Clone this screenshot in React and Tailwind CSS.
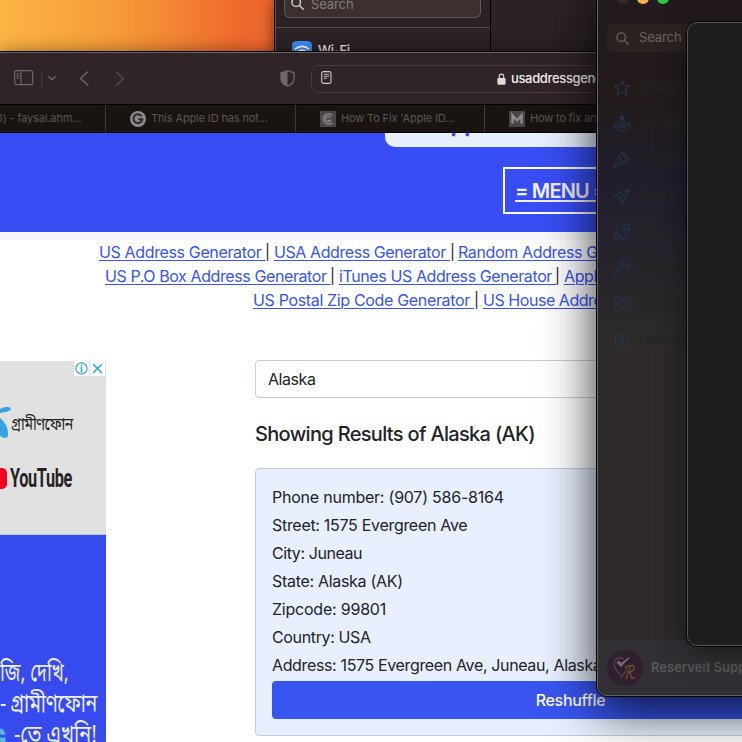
import React from "react";

const stroke = {
  fill: "none",
  stroke: "currentColor",
  strokeWidth: 1.2,
  strokeLinecap: "round",
  strokeLinejoin: "round",
};

function SearchIcon({ className }) {
  return (
    <svg viewBox="0 0 14 14" className={className} {...stroke} strokeWidth="1.4">
      <circle cx="5.6" cy="5.6" r="4.6" />
      <path d="M9 9l4.2 4.2" />
    </svg>
  );
}

function SettingsWindow() {
  return (
    <div className="absolute left-[274px] top-0 h-[60px] w-[480px] flex border-l border-black bg-[#2c2223] shadow-[0_0_14px_rgba(0,0,0,0.55)]">
      <div className="w-[216px] border-l border-[#5b5150] border-r border-r-black">
        <div className="ml-2 flex h-[18px] w-[197px] items-start rounded-b-md border border-t-0 border-[#625857] bg-[#3b302f] pl-1.5">
          <SearchIcon className="-mt-[3px] size-[13px] text-[#e2dedd]" />
          <span className="ml-[7px] -mt-[4px] text-[13px] leading-4 tracking-[-0.1px] text-[#857b7a]">Search</span>
        </div>
        <div className="mt-[9px] h-px bg-[#574d4c]" />
        <div className="mt-[13px] flex pl-4">
          <svg viewBox="0 0 20 20" className="size-5" fill="none">
            <rect width="20" height="20" rx="4.5" fill="#3b88f4" />
            <path d="M2.8 8.4Q10 2.2 17.2 8.4M5.4 11.2q4.6-3.9 9.2 0" stroke="#fff" strokeWidth="1.7" />
          </svg>
          <span className="ml-[6px] mt-px text-[13px] font-medium leading-4 tracking-[-0.3px] text-[#e8e4e3]">Wi-Fi</span>
        </div>
      </div>
    </div>
  );
}

function Toolbar() {
  return (
    <div className="flex h-[51px] shrink-0 items-center bg-[#302526] text-[#716766]">
      <svg viewBox="0 0 20 16" className="ml-[14px] mb-px h-4 w-5 shrink-0" {...stroke}>
        <rect x=".7" y=".7" width="18" height="14" rx="2" />
        <path d="M7 .7v14M3 3.5h1.8M3 5.7h1.8M3 7.9h1.8" />
      </svg>
      <div className="ml-[7px] h-[18px] w-px bg-[#453a3a]" />
      <svg viewBox="0 0 8 5" className="ml-1.5 h-[5px] w-2 shrink-0" {...stroke} strokeWidth="1.3">
        <path d="M.8 .8L4 3.8 7.2 .8" />
      </svg>
      <svg viewBox="0 0 10 15" className="ml-[23px] h-[15px] w-[10px] shrink-0" {...stroke} strokeWidth="1.5">
        <path d="M8.5 1L1.6 7.5 8.5 14" />
      </svg>
      <svg viewBox="0 0 10 15" className="ml-[26px] h-[15px] w-[10px] shrink-0 text-[#574c4c]" {...stroke} strokeWidth="1.5">
        <path d="M1.5 1L8.4 7.5 1.5 14" />
      </svg>
      <svg viewBox="0 0 15 17" className="ml-[155px] mr-px mb-px h-[17px] w-[15px] shrink-0">
        <path d="M7.5 .7L14 3v6c0 3.300-3 5.900-6.500 7.200C4 14.900 1 12.300 1 9V3z" fill="none" stroke="currentColor" strokeWidth="1.3" />
        <path d="M7.500 .7v15.500C4 14.900 1 12.300 1 9V3z" fill="currentColor" />
      </svg>
      <div className="ml-[15px] flex h-[28px] w-[500px] shrink-0 items-center rounded-lg border border-[#483c3c]">
        <svg viewBox="0 0 11 13" className="ml-[9px] mb-[3px] h-[13px] w-[11px] text-[#cfcaca]" {...stroke} strokeWidth="1.1">
          <rect x=".7" y=".6" width="9.300" height="11.800" rx="1.6" />
          <path d="M3 3.300h4.800M3 5.300h4.800M3 7.300h2.600" strokeWidth=".9" />
        </svg>
        <svg viewBox="0 0 9 12" className="ml-[165px] h-3 w-[9px] text-[#dedad9]">
          <rect x=".4" y="5" width="8.200" height="6.800" rx="1.2" fill="currentColor" />
          <path d="M2.300 5.500V3.300a2.200 2.200 0 014.400 0v2.200" fill="none" stroke="currentColor" strokeWidth="1.100" />
        </svg>
        <span className="ml-[5px] text-[13px] font-medium tracking-[-0.35px] text-[#f0eeee]">usaddressgenerator.com</span>
      </div>
    </div>
  );
}

function TabBar() {
  return (
    <div className="flex h-[27px] shrink-0 items-center bg-[#191412] text-[11px] tracking-[-0.14px] text-[#5c5654]">
      <div className="flex h-full w-[106px] shrink-0 items-center border-r border-[#443a39]">
        <span className="-ml-[4px] whitespace-nowrap">6) - faysal.ahm...</span>
      </div>
      <div className="flex h-full w-[190px] shrink-0 items-center border-r border-[#443a39] pl-6">
        <svg viewBox="0 0 16 16" className="size-4">
          <circle cx="8" cy="8" r="8" fill="#8b8988" />
          <path d="M11.500 5.300A4.400 4.400 0 1012.200 8.300H8.300" fill="none" stroke="#2d2a29" strokeWidth="2" />
        </svg>
        <span className="ml-[5px] whitespace-nowrap">This Apple ID has not...</span>
      </div>
      <div className="flex h-full w-[189px] shrink-0 items-center border-r border-[#443a39] pl-6">
        <svg viewBox="0 0 16 16" className="size-4">
          <rect width="16" height="16" rx="1" fill="#4b4847" />
          <path d="M12.300 4.600A5.100 5.100 0 1012.300 11.400M10.300 6.500A2.600 2.600 0 1010.300 9.500H8" fill="none" stroke="#888585" strokeWidth="1.500" />
        </svg>
        <span className="ml-[5px] whitespace-nowrap">How To Fix 'Apple ID...</span>
      </div>
      <div className="flex h-full w-[190px] shrink-0 items-center pl-6">
        <svg viewBox="0 0 16 16" className="size-4">
          <rect width="16" height="16" fill="#484544" />
          <path d="M3.500 12.500V4.500L8 9.500l4.500-5v8" fill="none" stroke="#8f8c8b" strokeWidth="2.400" />
        </svg>
        <span className="ml-[5px] whitespace-nowrap">How to fix an Apple ID</span>
      </div>
    </div>
  );
}

function Ad() {
  return (
    <aside className="mt-[49px] flex h-[381px] w-[106px] shrink-0 flex-col overflow-hidden bg-[#374aee]">
      <div className="h-[174px] shrink-0 border-b border-[#c6c8dc] bg-[#e1e1e1]">
        <div className="flex h-[15px] justify-end gap-px pr-px text-[#27aac5]">
          <svg viewBox="0 0 15 15" className="size-[15px] bg-white" {...stroke} strokeWidth="1.1">
            <circle cx="7.500" cy="7.500" r="5.600" />
            <path d="M7.500 6.500v4.200M7.500 4.300v.3" strokeWidth="1.600" />
          </svg>
          <svg viewBox="0 0 15 15" className="size-[15px] bg-white" {...stroke} strokeWidth="1.500">
            <path d="M3.500 3.500l8 8M11.500 3.500l-8 8" />
          </svg>
        </div>
        <div className="mt-[30px] flex h-[34px] items-center">
          <svg viewBox="0 0 12 34" className="h-[34px] w-3 shrink-0" fill="#37a2e6">
            <path d="M0 3C4 .5 9 .4 10.500 2 12.500 4.500 6 6 0 7zM0 12c5 4 8.500 10 8 17-.3 3.500-3.500 4-8 1z" />
          </svg>
          <span className="-ml-[1px] mt-1 origin-left scale-x-[0.79] whitespace-nowrap font-[Noto_Sans_Bengali,Noto_Sans,sans-serif] text-[18px] tracking-[-0.6px] text-[#242424]">গ্রামীণফোন</span>
        </div>
        <div className="mt-[26px] flex h-[24px] items-center">
          <div className="h-[21px] w-[7px] rounded-r-[5px] bg-[#f40020]" />
          <span className="ml-[3px] mt-0.5 origin-left scale-x-[0.65] font-['Roboto'] text-[25px] font-bold leading-6 tracking-[-0.5px] text-[#242424]">YouTube</span>
        </div>
      </div>
      <div className="mt-[124px] flex flex-col whitespace-nowrap font-[Noto_Sans_Bengali,Noto_Sans,sans-serif] text-[25px] leading-[31px] text-[#eef0ff]">
        <div className="origin-left scale-x-[0.73]">জি, দেখি,</div>
        <div className="origin-left scale-x-[0.78] tracking-[-0.5px]">- গ্রামীণফোন</div>
        <div className="flex">
          <span className="-ml-[13px] w-[27px] shrink-0 pt-0.5 font-['Roboto'] text-[29px] font-black leading-8 text-[#54bbe3]">G</span>
          <span className="origin-left scale-x-[0.79]">-তে এখনি!</span>
        </div>
      </div>
    </aside>
  );
}

const link = "text-[#3654ee] underline underline-offset-2 decoration-1 whitespace-pre shrink-0";
const bar = "shrink-0 text-left text-[15px] text-[#202428]";

function Links() {
  return (
    <nav className="text-[16px] leading-6 tracking-[-0.36px]">
      <div className="flex pl-[99px]">
        <a className={`${link} w-[166px]`}>US Address Generator </a><span className={`${bar} w-[9px]`}>|</span>
        <a className={`${link} w-[176px] tracking-[-0.42px]`}>USA Address Generator </a><span className={`${bar} w-[8px]`}>|</span>
        <a className={link}>Random Address Generator </a>
      </div>
      <div className="flex pl-[105px]">
        <a className={`${link} w-[225px] tracking-[-0.4px]`}>US P.O Box Address Generator </a><span className={`${bar} w-[9px]`}>|</span>
        <a className={`${link} w-[216px] tracking-[-0.4px]`}>iTunes US Address Generator </a><span className={`${bar} w-[9px]`}>|</span>
        <a className={link}>Apple ID Address</a>
      </div>
      <div className="flex pl-[253px]">
        <a className={`${link} w-[221px] tracking-[-0.34px]`}>US Postal Zip Code Generator </a><span className={`${bar} w-[9px]`}>|</span>
        <a className={`${link} tracking-[-0.45px]`}>US House Address</a>
      </div>
    </nav>
  );
}

const results = [
  ["Phone number: (907) 586-8164", "tracking-[-0.23px]"],
  ["Street: 1575 Evergreen Ave", "tracking-[-0.3px]"],
  ["City: Juneau", "tracking-[-0.42px]"],
  ["State: Alaska (AK)", "tracking-[-0.3px]"],
  ["Zipcode: 99801", "tracking-[-0.22px]"],
  ["Country: USA", "tracking-[-0.36px]"],
  ["Address: 1575 Evergreen Ave, Juneau, Alaska, 99801", "tracking-[-0.36px]"],
];

function BrowserWindow() {
  return (
    <div className="absolute left-0 top-[51px] flex h-[700px] w-[900px] flex-col border-t border-black bg-white shadow-[0_0_16px_rgba(0,0,0,0.4)]">
      <div className="h-px shrink-0 bg-[#6b6060]" />
      <Toolbar />
      <div className="h-px shrink-0 bg-black" />
      <TabBar />
      <div className="h-px shrink-0 bg-black" />
      <header className="h-[99px] shrink-0 overflow-hidden bg-[#384ef4]">
        <div className="ml-[385px] flex h-[14px] w-[370px] items-end rounded-b-[10px] bg-[#e8effe] pl-[49px]">
          <span className="mb-[11px] text-[22px] font-bold leading-6 text-[#384ef4]">Apple ID</span>
        </div>
        <div className="ml-[503px] mt-[20px] flex h-[47px] w-[134px] items-center border-2 border-white pl-[10px]">
          <span className="whitespace-nowrap text-[20px] font-semibold tracking-[-0.85px] text-[#f3f2f0] underline decoration-2 underline-offset-[2px]">= MENU =</span>
        </div>
      </header>
      <div className="h-2 shrink-0 bg-[#f6f8fa]" />
      <Links />
      <div className="flex">
        <Ad />
        <main className="ml-[149px] mt-12 w-[630px] shrink-0 text-[16px] tracking-[-0.3px] text-[#202428]">
          <div className="flex h-[38px] items-center rounded-[4px] border border-[#c6cdd7] pl-3 tracking-[-0.45px]">Alaska</div>
          <h1 className="mt-6 text-[20px] font-medium leading-6 tracking-[-0.68px]">Showing Results of Alaska (AK)</h1>
          <section className="mt-[22px] h-[268px] rounded-[4px] border border-[#c2cadb] bg-[#e8effe] px-4 pt-[14px]">
            {results.map(([line, tracking]) => (
              <p key={line} className={`whitespace-nowrap leading-7 ${tracking}`}>{line}</p>
            ))}
            <button className="mt-0.5 flex h-[38px] w-full items-center justify-center rounded-[4px] bg-[#3855f0] pl-px font-medium text-white">Reshuffle</button>
          </section>
        </main>
      </div>
    </div>
  );
}

const menu = [
  ["Discover", <path d="M9 1.500l2.200 5.100 5.400.5-4.100 3.600 1.300 5.400L9 13.300l-4.800 2.800 1.300-5.400L1.400 7.100l5.400-.5z" />],
  ["Arcade", <><circle cx="9" cy="2.800" r="1.900" fill="currentColor" /><path d="M9 4v6M6.500 7L1 9.700l8 3.600 8-3.600L11.500 7M1 9.700v3l8 4 8-4v-3M6.500 10q2.500 1.500 5 0" /></>],
  ["Create", <path d="M9.200 1.200l6.300 6.300-3.700 4.600-6.600-6.300zM11.200 3.200L9.800 5.200M13.400 5.400L12 7.200M5.200 5.800L4.700 8.200l1.600 1.800-4.600 4.200c-1.300 1.500.4 3.300 1.900 2l4.200-4.600 1.900 1.400 2.100-.9" />],
  ["Work", <path d="M16.500 2L1 8.500l6 2.300 2.500 6zM7 10.800L16.500 2" />],
  ["Play", <><path d="M16.500 1.500c-4-.2-7 1.200-9.500 5L3.500 7.200 1.500 10l3 .5 3.500 3.500.5 3 2.800-2 .5-3.500c3.800-2.500 5-6 4.700-10zM3.800 12c-1.500.5-2.200 2-2.300 4.500 2.300-.1 3.900-.8 4.500-2.300" /><circle cx="11.500" cy="6.500" r="1" fill="currentColor" /></>],
  ["Develop", <path d="M6 2.500C8.500 .8 11 .8 13 2.300l1.800 2-.2 1.400 1.200.3 1.200 1-2.200 2.500-1.200-1.100-.2-1.300-1.500-.2L3 16.300c-1.300 1.100-3-.5-1.900-1.800l8.900-8.300-.3-1.700C8.700 3.500 7.700 3.300 6 3.500z" />],
  ["Categories", <><rect x="2.500" y="2.500" width="5" height="5" rx="1" /><rect x="10.500" y="2.500" width="5" height="5" rx="1" /><rect x="2.500" y="10.500" width="5" height="5" rx="1" /><rect x="10.500" y="10.500" width="5" height="5" rx="1" /></>],
  ["Updates", <path d="M6.500 4.500H4.500A2 2 0 002.500 6.500v7A2 2 0 004.500 15.500h8.500a2 2 0 002-2V6.500a2 2 0 00-2-2h-2M8.500 2v9.500M6 9l2.500 2.500L11 9" />],
];

function StoreWindow() {
  return (
    <div className="absolute left-[597px] -top-[12px] flex h-[708px] w-[400px] flex-col overflow-hidden rounded-[10px] border border-[#646262] bg-linear-to-b from-[#231b1b] from-15% via-[#201e2c] via-27% to-[#2d2a29] to-50% shadow-[0_0_0_1px_#050505,0_12px_52px_rgba(0,0,0,0.85)]">
      <div className="mt-[3px] flex h-3 shrink-0 gap-2 pl-[19px]">
        <i className="size-3 rounded-full bg-[#302b2a]" />
        <i className="size-3 rounded-full bg-[#f9b440]" />
        <i className="size-3 rounded-full bg-[#2fc642]" />
      </div>
      <div className="ml-[9px] mt-[20px] flex h-[28px] w-[150px] shrink-0 items-center rounded-md bg-[#2b2322] pl-[9px] text-[#6b6463]">
        <SearchIcon className="size-[13px] shrink-0" />
        <span className="ml-[10px] text-[13px] tracking-[-0.1px]">Search</span>
      </div>
      <ul className="mt-[18px] text-[15px] tracking-[-0.1px] text-[#252422]">
        {menu.map(([label, icon]) => (
          <li key={label} className="flex h-9 items-center pl-[15px]">
            <svg viewBox="0 0 18 18" className="size-[18px] shrink-0 text-[#24354b]" {...stroke} strokeWidth="1.1">{icon}</svg>
            <span className="ml-2">{label}</span>
          </li>
        ))}
      </ul>
      <div className="mt-auto flex h-[55px] shrink-0 items-center bg-[#323034] pl-[9px]">
        <svg viewBox="0 0 36 36" className="size-9 shrink-0" fill="none">
          <circle cx="18" cy="18" r="18" fill="#30202f" />
          <path d="M17 8.500C10 6 5.500 11 7.500 16.500c1.400 4 4.500 7.500 7.300 10.500 2-3 4-6 5.500-8.500" stroke="#5c4636" strokeWidth="1.200" />
          <path d="M10 12.500l4 4 8-9-7.500 6-2-2z" stroke="#77717a" fill="#77717a" />
          <path d="M19 29q3-7 4-13 5-2 4 2-1 4-5 4 2 1 2 4 1 4 4 1M18 18q3-3 7-2" stroke="#77532b" strokeWidth="1.200" />
        </svg>
        <span className="ml-[8px] whitespace-nowrap text-[13px] font-semibold text-[#585759]">Reserveit Support</span>
      </div>
    </div>
  );
}

export default function App() {
  return (
    <div className="relative h-[742px] w-[742px] overflow-hidden bg-linear-to-r from-[#fcb544] via-[#f59a38] via-[120px] to-[#ee682d] to-[240px] font-[Inter,sans-serif]">
      <SettingsWindow />
      <BrowserWindow />
      <StoreWindow />
      <div className="absolute left-[687px] top-[22px] h-[624px] w-[300px] rounded-[10px] border border-[#575757] bg-[#1d1d1d] shadow-[0_0_0_1px_#050505,0_8px_28px_rgba(0,0,0,0.5)]" />
    </div>
  );
}
